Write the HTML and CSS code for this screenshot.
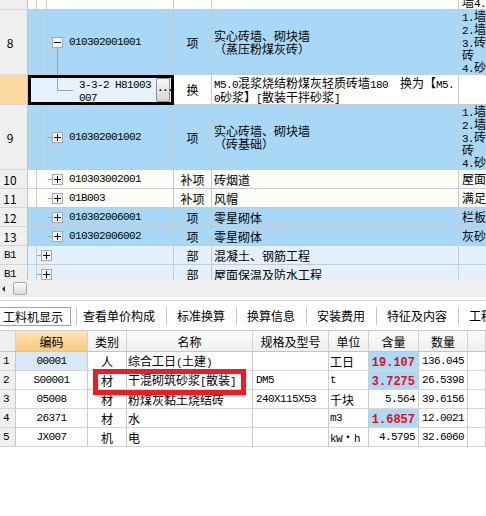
FILE: index.html
```html
<!DOCTYPE html>
<html lang="zh-CN">
<head>
<meta charset="utf-8">
<title>工料机显示</title>
<link rel="stylesheet" href="styles.css">
</head>
<body>
<div class="top">
<table class="tg">
<colgroup><col class="c-rh"><col class="c-a"><col class="c-b"><col class="c-code"><col class="c-type"><col class="c-name"><col class="c-last"></colgroup>
<tr class="r0"><td class="rh"></td><td></td><td></td><td></td><td></td><td></td><td class="last top-al"><div class="peek">墙<span class="m">4.</span>砂</div></td></tr>
<tr class="r8 blue"><td class="rh">8</td><td></td><td></td>
<td><div class="tree p5"><span class="tog open"><svg width="11" height="11" viewBox="0 0 11 11"><rect x="0.5" y="0.5" width="10" height="10" fill="#f4f4f4" stroke="#a8a8a8"/><path d="M2 5.5h7" stroke="#111"/></svg></span><span class="m code">010302001001</span></div></td>
<td class="ty">项</td><td class="nm">实心砖墙、砌块墙<br>（蒸压粉煤灰砖）</td>
<td class="last"><span class="m">1.</span>墙<br><span class="m">2.</span>墙<br><span class="m">3.</span>砖<br>砖<br><span class="m">4.</span>砂</td></tr>
<tr class="rsel"><td class="rh cur"></td>
<td colspan="3" class="selcell"><div class="selbox"><i class="elbow"></i><span class="m code2">3-3-2 H81003<br>007</span><span class="dots m">...</span></div></td>
<td class="ty">换</td>
<td class="nm"><span class="m">M5.0</span>混浆烧结粉煤灰轻质砖墙<span class="m">180&nbsp;&nbsp;</span>换为【<span class="m">M5.</span><br><span class="m">0</span>砂浆】<span class="m">[</span>散装干拌砂浆<span class="m">]</span></td>
<td class="last"></td></tr>
<tr class="r9 blue"><td class="rh">9</td><td></td><td></td>
<td><div class="tree"><i class="stub s5"></i><span class="tog"><svg width="11" height="11" viewBox="0 0 11 11"><rect x="0.5" y="0.5" width="10" height="10" fill="#f4f4f4" stroke="#a8a8a8"/><path d="M2 5.5h7M5.5 2v7" stroke="#111"/></svg></span><span class="m code">010302001002</span></div></td>
<td class="ty">项</td><td class="nm">实心砖墙、砌块墙<br>（砖基础）</td>
<td class="last"><span class="m">1.</span>墙<br><span class="m">2.</span>墙<br><span class="m">3.</span>砖<br>砖<br><span class="m">4.</span>砂</td></tr>
<tr class="rs pale"><td class="rh">10</td><td></td>
<td colspan="2"><div class="tree p11"><i class="stub"></i><span class="tog"><svg width="11" height="11" viewBox="0 0 11 11"><rect x="0.5" y="0.5" width="10" height="10" fill="#f4f4f4" stroke="#a8a8a8"/><path d="M2 5.5h7M5.5 2v7" stroke="#111"/></svg></span><span class="m code">010303002001</span></div></td>
<td class="ty">补项</td><td class="nm">砖烟道</td><td class="last">屋面</td></tr>
<tr class="rs pale"><td class="rh">11</td><td></td>
<td colspan="2"><div class="tree p11"><i class="stub"></i><span class="tog"><svg width="11" height="11" viewBox="0 0 11 11"><rect x="0.5" y="0.5" width="10" height="10" fill="#f4f4f4" stroke="#a8a8a8"/><path d="M2 5.5h7M5.5 2v7" stroke="#111"/></svg></span><span class="m code">01B003</span></div></td>
<td class="ty">补项</td><td class="nm">风帽</td><td class="last">满足</td></tr>
<tr class="rs blue"><td class="rh">12</td><td></td>
<td colspan="2"><div class="tree p11"><i class="stub"></i><span class="tog"><svg width="11" height="11" viewBox="0 0 11 11"><rect x="0.5" y="0.5" width="10" height="10" fill="#f4f4f4" stroke="#a8a8a8"/><path d="M2 5.5h7M5.5 2v7" stroke="#111"/></svg></span><span class="m code">010302006001</span></div></td>
<td class="ty">项</td><td class="nm">零星砌体</td><td class="last">栏板</td></tr>
<tr class="rs blue"><td class="rh">13</td><td></td>
<td colspan="2"><div class="tree p11"><i class="stub"></i><span class="tog"><svg width="11" height="11" viewBox="0 0 11 11"><rect x="0.5" y="0.5" width="10" height="10" fill="#f4f4f4" stroke="#a8a8a8"/><path d="M2 5.5h7M5.5 2v7" stroke="#111"/></svg></span><span class="m code">010302006002</span></div></td>
<td class="ty">项</td><td class="nm">零星砌体</td><td class="last">灰砂</td></tr>
<tr class="rs grp"><td class="rh m">B1</td><td></td>
<td colspan="2"><div class="tree"><i class="stub"></i><span class="tog"><svg width="11" height="11" viewBox="0 0 11 11"><rect x="0.5" y="0.5" width="10" height="10" fill="#f4f4f4" stroke="#a8a8a8"/><path d="M2 5.5h7M5.5 2v7" stroke="#111"/></svg></span></div></td>
<td class="ty">部</td><td class="nm">混凝土、钢筋工程</td><td class="last"></td></tr>
<tr class="rs grp"><td class="rh m">B1</td><td></td>
<td colspan="2"><div class="tree"><i class="stub"></i><span class="tog"><svg width="11" height="11" viewBox="0 0 11 11"><rect x="0.5" y="0.5" width="10" height="10" fill="#f4f4f4" stroke="#a8a8a8"/><path d="M2 5.5h7M5.5 2v7" stroke="#111"/></svg></span></div></td>
<td class="ty">部</td><td class="nm">屋面保温及防水工程</td><td class="last"></td></tr>
</table>
</div>
<div class="sb"><i class="arr"></i><i class="thumb"></i></div>
<div class="tabs">
<div class="tab on">工料机显示</div><i class="sep s1"></i><div class="tab second">查看单价构成</div><i class="sep"></i><div class="tab">标准换算</div><i class="sep"></i><div class="tab">换算信息</div><i class="sep"></i><div class="tab">安装费用</div><i class="sep"></i><div class="tab">特征及内容</div><i class="sep"></i><div class="tab">工程量明细</div>
</div>
<div class="bwrap">
<table class="bt">
<colgroup><col class="bc-rh"><col class="bc-code"><col class="bc-cat"><col class="bc-name"><col class="bc-spec"><col class="bc-unit"><col class="bc-amt"><col class="bc-qty"><col class="bc-rest"></colgroup>
<tr class="hd"><th class="rh"></th><th class="or">编码</th><th>类别</th><th>名称</th><th>规格及型号</th><th>单位</th><th>含量</th><th>数量</th><th></th></tr>
<tr class="br"><td class="rh m">1</td><td class="ctr m cursel">00001</td><td class="ctr">人</td><td class="nm">综合工日<span class="m">(</span>土建<span class="m">)</span></td><td class="sp"></td><td class="un">工日</td><td class="amt hl"><span class="red">19.107</span></td><td class="qty m">136.045</td><td></td></tr>
<tr class="br"><td class="rh m">2</td><td class="ctr m">S00001</td><td class="ctr">材</td><td class="nm">干混砌筑砂浆<span class="m">[</span>散装<span class="m">]</span></td><td class="sp m">DM5</td><td class="un m">t</td><td class="amt hl"><span class="red">3.7275</span></td><td class="qty m">26.5398</td><td></td></tr>
<tr class="br"><td class="rh m">3</td><td class="ctr m">05008</td><td class="ctr">材</td><td class="nm">粉煤灰黏土烧结砖</td><td class="sp m">240X115X53</td><td class="un">千块</td><td class="amt m">5.564</td><td class="qty m">39.6156</td><td></td></tr>
<tr class="br"><td class="rh m">4</td><td class="ctr m">26371</td><td class="ctr">材</td><td class="nm">水</td><td class="sp"></td><td class="un m">m3</td><td class="amt hl"><span class="red">1.6857</span></td><td class="qty m">12.0021</td><td></td></tr>
<tr class="br"><td class="rh m">5</td><td class="ctr m">JX007</td><td class="ctr">机</td><td class="nm">电</td><td class="sp"></td><td class="un"><span class="m">kW</span>・<span class="m">h</span></td><td class="amt m">4.5795</td><td class="qty m">32.6060</td><td></td></tr>
</table>
<div class="redbox"></div>
</div>
</body>
</html>
```

FILE: styles.css
```css
* { box-sizing: border-box; margin: 0; padding: 0; }
html, body { background: #fff; }
body {
  width: 486px;
  height: 516px;
  overflow: hidden;
  font-family: "Noto Sans CJK SC", "Noto Sans", sans-serif;
  font-size: 12px;
  line-height: 13px;
  color: #000;
}
i { display: block; font-style: normal; }
.m {
  font-family: "Liberation Mono", "DejaVu Sans Mono", monospace;
  font-size: 11px;
  letter-spacing: -0.6px;
  line-height: 9px;
}
table { border-collapse: separate; border-spacing: 0; table-layout: fixed; }
td, th {
  padding: 0;
  overflow: hidden;
  white-space: nowrap;
  vertical-align: middle;
  font-weight: normal;
}

/* ---------- top grid ---------- */
.top { height: 280px; overflow: hidden; }
.tg { width: 486px; }
.c-rh { width: 28px; }
.c-a { width: 9px; }
.c-b { width: 10px; }
.c-code { width: 127px; }
.c-type { width: 38px; }
.c-name { width: 247px; }
.c-last { width: 27px; }

.tg td {
  border-right: 1px solid #c3ccd4;
  border-bottom: 1px solid #c3ccd4;
  background: #fff;
}
.blue td { background: #a9d8f6; }
.pale td { background: #fbfdf6; }
.grp td { background: #e3f1fc; }
.tg td.rh {
  background: #efefef;
  border-right-color: #c4c4c4;
  border-bottom-color: #d6d6d6;
  text-align: center;
  padding-right: 7px;
}
.tg td.rh.cur { background: #fbd89f; }

.r0 { height: 10px; }
.r8 { height: 63px; }
.rsel { height: 30px; }
.r9 { height: 65px; }
.rs { height: 19px; }

.tg td.ty { text-align: center; }
.tg td.nm { padding-left: 2px; }
.tg td.last { padding-left: 3px; border-right: 0; line-height: 12px; }
.tg .r9 td.last { line-height: 11.5px; }
.tg td.top-al { vertical-align: top; }
.peek { margin-top: -4px; }

.tree { display: flex; align-items: center; }
.p5 { padding-left: 5px; }
.p11 { padding-left: 11px; }
.stub { width: 4px; height: 0; border-top: 1px solid #a6a6a6; }
.stub.s5 { width: 5px; }
.tog { display: block; width: 11px; height: 11px; position: relative; }
.tog svg { display: block; }
.tog.open::after {
  content: "";
  position: absolute;
  left: 5px;
  top: 11px;
  height: 40px;
  border-left: 1px solid #a0a0a0;
}
.code { margin-left: 6px; line-height: 13px; }

.tg td.selcell { border-right: 0; border-bottom: 0; background: #fff; }
.selbox {
  display: flex;
  align-items: flex-start;
  height: 30px;
  border: 3px solid #000;
  background: #e5f2fc;
}
.elbow {
  margin-left: 26px;
  width: 16px;
  height: 13px;
  border-left: 1px solid #a0a0a0;
  border-bottom: 1px solid #a0a0a0;
}
.code2 { margin-left: 6px; margin-top: 1px; line-height: 13px; }
.dots {
  margin-left: auto;
  margin-right: 1px;
  width: 14px;
  height: 24px;
  border: 1px solid #8e8e8e;
  border-radius: 2px;
  background: linear-gradient(#f8f8f8, #d4d4d4);
  font-weight: bold;
  text-align: center;
  line-height: 19px;
  letter-spacing: -1.5px;
}

/* ---------- scrollbar + tabs ---------- */
.sb { height: 17px; background: #efefef; display: flex; align-items: center; }
.arr {
  width: 0;
  height: 0;
  border-style: solid;
  border-width: 3px 3px 3px 0;
  border-color: transparent #333 transparent transparent;
  margin-left: 2px;
}
.thumb {
  margin-left: 8px;
  width: 14px;
  height: 13px;
  border: 1px solid #a9a9a9;
  border-radius: 2px;
  background: linear-gradient(#fbfbfb, #dcdcdc);
}
.tabs {
  margin-top: 3px;
  height: 30px;
  border-top: 1px solid #d2d2d2;
  display: flex;
  align-items: center;
  overflow: hidden;
  white-space: nowrap;
  line-height: 16px;
  padding-top: 1px;
}
.tab { flex: none; padding: 0 11px 0 10px; }
.tab.on {
  margin-left: -5px;
  width: 76px;
  height: 19px;
  border: 1px solid #a4a4a4;
  padding: 0;
  text-align: center;
  line-height: 17px;
}
.tab.second { padding-left: 6px; }
.sep { flex: none; width: 1px; height: 18px; background: #c4c4c4; }
.sep.s1 { margin-left: 5px; }

/* ---------- bottom grid ---------- */
.bwrap { position: relative; }
.bt { width: 486px; }
.bc-rh { width: 16px; }
.bc-code { width: 72px; }
.bc-cat { width: 39px; }
.bc-name { width: 126px; }
.bc-spec { width: 76px; }
.bc-unit { width: 40px; }
.bc-amt { width: 50px; }
.bc-qty { width: 49px; }
.bc-rest { width: 18px; }

.bt tr.hd { height: 22px; }
.bt tr.br { height: 19px; }
.bt th {
  background: linear-gradient(#fbfbfb, #efefef);
  border-top: 1px solid #cdcdcd;
  border-right: 1px solid #d0d0d0;
  border-bottom: 1px solid #c4c4c4;
  text-align: center;
}
.bt th.or { background: linear-gradient(#fde4b6, #f7ca7e); }
.bt th.rh { background: #efefef; }
.bt td {
  border-right: 1px solid #cbcbcb;
  border-bottom: 1px solid #d6d6d6;
  background: #fff;
}
.bt td.rh { background: #efefef; padding-left: 3px; border-right-color: #c8c8c8; }
.bt td.ctr { text-align: center; }
.bt td.nm { padding-left: 1px; }
.bt td.sp { padding-left: 3px; }
.bt td.un { padding-left: 1px; }
.bt td.amt { text-align: right; padding-right: 3px; }
.bt td.qty { padding-left: 3px; }
.bt td.cursel { background: #d7e9f8; }
.bt td.hl { background: #abd9f7; }
.red {
  color: #df101c;
  font-weight: bold;
  font-family: "Liberation Mono", "DejaVu Sans Mono", monospace;
  font-size: 12px;
  line-height: 9px;
}
.redbox {
  position: absolute;
  left: 93px;
  top: 39px;
  width: 153px;
  height: 26px;
  border: 5px solid #ec1c24;
}
```
